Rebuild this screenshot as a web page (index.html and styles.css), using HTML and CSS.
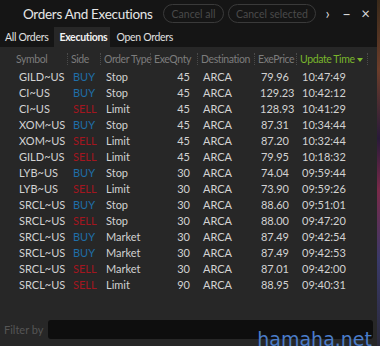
FILE: index.html
```html
<!DOCTYPE html>
<html lang="en">
<head>
  <meta charset="UTF-8">
  <title>Orders And Executions</title>
  <link rel="stylesheet" href="styles.css">
</head>
<body>

<div class="window">
  <div class="titlebar">
    <span class="title">Orders And Executions</span>
    <button class="pill cancel-all">Cancel all</button>
    <button class="pill cancel-sel">Cancel selected</button>
    <span class="win-btn first">&rsaquo;</span>
    <span class="win-btn">&ndash;</span>
    <span class="win-btn">&times;</span>
  </div>

  <div class="tabs">
    <span class="tab">All Orders</span>
    <span class="tab active">Executions</span>
    <span class="tab">Open Orders</span>
  </div>

  <div class="grid-area">
    <div class="row head">
      <span>Symbol</span>
      <span class="sep">Side</span>
      <span class="sep">Order Type</span>
      <span class="sep">ExeQnty</span>
      <span class="sep">Destination</span>
      <span class="sep">ExePrice</span>
      <span class="sep sorted">Update Time <i class="caret"></i></span>
    </div>
    <div id="rows"></div>
  </div>

  <div class="footer">
    <span class="filter-label">Filter by</span>
    <div class="filter-input"></div>
    <span class="watermark">hamaha.net</span>
  </div>
</div>
<div class="desktop"></div>

<script>
  const data = [
    ["GILD~US", "BUY", "Stop", 45, "ARCA", "79.96", "10:47:49"],
    ["CI~US", "BUY", "Stop", 45, "ARCA", "129.23", "10:42:12"],
    ["CI~US", "SELL", "Limit", 45, "ARCA", "128.93", "10:41:29"],
    ["XOM~US", "BUY", "Stop", 45, "ARCA", "87.31", "10:34:44"],
    ["XOM~US", "SELL", "Limit", 45, "ARCA", "87.20", "10:32:44"],
    ["GILD~US", "SELL", "Limit", 45, "ARCA", "79.95", "10:18:32"],
    ["LYB~US", "BUY", "Stop", 30, "ARCA", "74.04", "09:59:44"],
    ["LYB~US", "SELL", "Limit", 30, "ARCA", "73.90", "09:59:26"],
    ["SRCL~US", "BUY", "Stop", 30, "ARCA", "88.60", "09:51:01"],
    ["SRCL~US", "SELL", "Stop", 30, "ARCA", "88.00", "09:47:20"],
    ["SRCL~US", "BUY", "Market", 30, "ARCA", "87.49", "09:42:54"],
    ["SRCL~US", "BUY", "Market", 30, "ARCA", "87.49", "09:42:53"],
    ["SRCL~US", "SELL", "Market", 30, "ARCA", "87.01", "09:42:00"],
    ["SRCL~US", "SELL", "Limit", 90, "ARCA", "88.95", "09:40:31"]
  ];

  const rows = document.getElementById("rows");
  data.forEach(r => {
    const row = document.createElement("div");
    row.className = "row";
    row.innerHTML =
      `<span>${r[0]}</span>` +
      `<span class="${r[1] === "BUY" ? "buy" : "sell"}">${r[1]}</span>` +
      `<span>${r[2]}</span>` +
      `<span class="num">${r[3]}</span>` +
      `<span>${r[4]}</span>` +
      `<span class="num">${r[5]}</span>` +
      `<span>${r[6]}</span>`;
    rows.appendChild(row);
  });
</script>

</body>
</html>
```

FILE: styles.css
```css
body {
  margin: 0;
  background: #1b1b1b;
  font-family: Lato, "Noto Sans", sans-serif;
  font-size: 11px;
  display: flex;
  height: 346px;
  overflow: hidden;
}

.window {
  width: 377px;
  flex-shrink: 0;
  height: 346px;
  background: #272727;
  display: flex;
  flex-direction: column;
}

.desktop {
  flex: 1;
  background: linear-gradient(180deg, #3a2a1a 0%, #6b3d2a 20%, #2a1a3a 40%, #7a2a4a 55%, #3a3a6a 75%, #2a2a3a 100%);
}

.titlebar {
  height: 27px;
  background: #151515;
  display: flex;
  align-items: center;
  padding-left: 23px;
  color: #e6e6e6;
  white-space: nowrap;
}

.title {
  font-size: 13.5px;
  letter-spacing: -0.3px;
  width: 140px;
  flex-shrink: 0;
}

.pill {
  font-family: inherit;
  font-size: 10.5px;
  background: none;
  color: #4a4a4a;
  border: 1px solid #3a3a3a;
  border-radius: 10px;
  height: 19px;
  padding: 0;
  line-height: 16px;
  white-space: nowrap;
  flex-shrink: 0;
}

.cancel-all {
  width: 61px;
  margin-right: 4px;
}

.cancel-sel {
  width: 88px;
}

.win-btn {
  width: 19px;
  text-align: center;
  font-size: 15px;
  line-height: 15px;
  color: #d8d8d8;
  flex-shrink: 0;
}

.win-btn.first {
  margin-left: 2px;
}

.tabs {
  height: 20px;
  background: #151515;
  display: flex;
  align-items: stretch;
}

.tab {
  display: flex;
  align-items: center;
  padding: 0 3px 0 5px;
  color: #e0e0e0;
  font-size: 10.5px;
  letter-spacing: -0.3px;
}

.tab.active {
  background: #272727;
  font-weight: bold;
  color: #f2f2f2;
  margin-left: 3px;
  padding: 0 3px 0 5px;
  margin-right: 1px;
}

.grid-area {
  flex: 1;
  padding-top: 3px;
}

.row {
  display: grid;
  grid-template-columns: 54px 33px 50px 47px 57px 42px 72px;
  padding-left: 13px;
  height: 16px;
  align-items: center;
  color: #d2d2d2;
  white-space: nowrap;
}

.row span {
  padding-left: 6px;
}

.row .num {
  text-align: right;
  padding-right: 7px;
}

.row.head {
  height: 18px;
  color: #7c7c7c;
  font-size: 10.5px;
}

.row.head span {
  padding-left: 3px;
  letter-spacing: -0.4px;
}

.row.head .sep {
  border-left: 1px dotted #4a4a4a;
}

.row.head .sorted {
  color: #79b52c;
  border-right: 1px dotted #4a4a4a;
}

.caret {
  display: inline-block;
  width: 0;
  height: 0;
  border-left: 3px solid transparent;
  border-right: 3px solid transparent;
  border-top: 4px solid #79b52c;
  vertical-align: 1px;
}

.buy {
  color: #1f6ea8;
}

.sell {
  color: #a3161f;
}

.footer {
  height: 26px;
  display: flex;
  align-items: center;
  padding: 0 4px 4px 4px;
  position: relative;
}

.filter-label {
  color: #555;
  margin-right: 5px;
}

.filter-input {
  flex: 1;
  height: 19px;
  background: #0e0e0e;
  border-radius: 3px;
}

.watermark {
  position: absolute;
  right: 5px;
  bottom: -4px;
  font-family: "DejaVu Sans", sans-serif;
  font-size: 19px;
  color: #4a7cc8;
}
```
